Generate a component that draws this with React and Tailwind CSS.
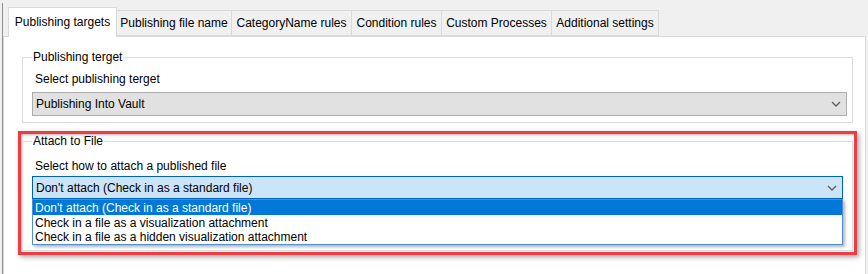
import React from 'react';

const TABS = [
    { label: "Publishing targets", width: "w-[109px]", active: true },
    { label: "Publishing file name", width: "w-[115px]" },
    { label: "CategoryName rules", width: "w-[120px]" },
    { label: "Condition rules", width: "w-[90px]" },
    { label: "Custom Processes", width: "w-[110px]" },
    { label: "Additional settings", width: "w-[107px]" },
];

const ATTACH_OPTIONS = [
    { label: "Don't attach (Check in as a standard file)", height: "h-[15px]", selected: true },
    { label: "Check in a file as a visualization attachment", height: "h-[15px]" },
    { label: "Check in a file as a hidden visualization attachment", height: "h-[14px]" },
];

const Chevron = () => (
    <svg width="10" height="6" viewBox="0 0 10 6" className="shrink-0">
        <path d="M1 1 L5 5 L9 1" fill="none" stroke="#5f5f5f" strokeWidth="1.3" />
    </svg>
);

const Tab = ({ tab }) => {
    if (tab.active) {
        return (
            <div className={`${tab.width} h-[30px] -mb-px relative z-10 bg-white border border-b-0 border-[#d9d9d9] flex items-center justify-center pb-[2px]`}>
                {tab.label}
            </div>
        );
    }
    return (
        <div className={`${tab.width} h-[26px] bg-[#f0f0f0] border border-l-0 border-[#d9d9d9] flex items-center justify-center`}>
            {tab.label}
        </div>
    );
};

const App = () => {
    return (
        <div
            className="w-[868px] h-[274px] overflow-hidden bg-[#f0f0f0] pt-[3px] pl-[2px] text-[12px] text-black"
            style={{ fontFamily: '"Liberation Sans", Arial, sans-serif' }}
        >
            <div className="h-full border-l border-[#8f8f8f] pt-[4px]">
                {/* tab strip */}
                <div className="flex items-end h-[29px] pl-[5px]">
                    {TABS.map((tab) => (
                        <Tab key={tab.label} tab={tab} />
                    ))}
                </div>

                {/* tab page */}
                <div className="w-[863px] h-[260px] bg-white border border-[#d9d9d9] pt-[13px] pl-[14px]">
                    <fieldset className="ml-[4px] w-[831px] border border-[#dcdcdc] pl-[9px] pr-[5px] pb-[6px]">
                        <legend className="px-[1px] leading-[14px]">Publishing terget</legend>
                        <div className="mt-[8px] pl-[3px] leading-[14px]">Select publishing terget</div>
                        <div className="mt-[6px] h-[24px] border border-[#adadad] bg-[#e1e1e1] flex items-center justify-between pl-[3px] pr-[5px]">
                            <span>Publishing Into Vault</span>
                            <Chevron />
                        </div>
                    </fieldset>

                    {/* highlighted area */}
                    <div className="mt-[8px] w-[839px] border-[3px] border-[#ee3d42] pb-[1px] shadow-[inset_1px_1px_3px_rgba(0,0,0,0.3),2px_2px_5px_rgba(0,0,0,0.35)]">
                        <fieldset className="ml-[1px] w-[831px] border border-[#dcdcdc] pl-[9px] pb-[51px]">
                            <legend className="px-[1px] leading-[14px]">Attach to File</legend>
                            <div className="mt-[11px] pl-[3px] leading-[14px]">Select how to attach a published file</div>
                            <div className="relative mt-[3px] w-[811px]">
                                <div className="h-[23px] border border-[#0062b8] bg-[#cce4f7] flex items-center justify-between pl-[3px] pr-[5px]">
                                    <span>Don't attach (Check in as a standard file)</span>
                                    <Chevron />
                                </div>
                                <div className="absolute left-0 top-full w-[811px] z-20 bg-white border border-[#4d8fd6] shadow-[2px_2px_3px_rgba(0,0,0,0.3)]">
                                    {ATTACH_OPTIONS.map((opt) => (
                                        <div
                                            key={opt.label}
                                            className={`${opt.height} flex items-center pl-[2px] ${opt.selected ? 'bg-[#0078d7] text-white' : ''}`}
                                        >
                                            {opt.label}
                                        </div>
                                    ))}
                                </div>
                            </div>
                        </fieldset>
                    </div>
                </div>
            </div>
        </div>
    );
};

export default App;
